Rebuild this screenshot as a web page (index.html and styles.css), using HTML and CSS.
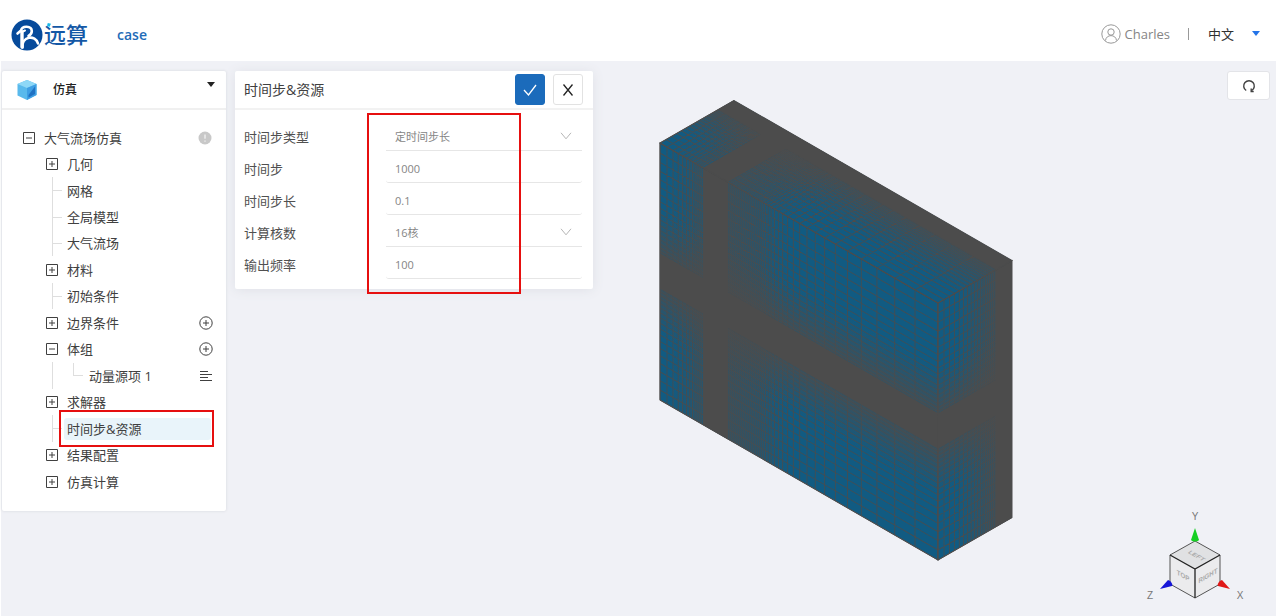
FILE: index.html
```html
<!DOCTYPE html>
<html lang="zh-CN">
<head>
<meta charset="utf-8">
<title>case</title>
<link rel="stylesheet" href="styles.css">
</head>
<body>
<svg class="defs" width="0" height="0" aria-hidden="true">
  <symbol id="plus" viewBox="0 0 12 12"><path d="M.5.5h11v11H.5zM3 6h6M6 3v6"/></symbol>
  <symbol id="minus" viewBox="0 0 12 12"><path d="M.5.5h11v11H.5zM3 6h6"/></symbol>
  <symbol id="add" viewBox="0 0 14 14"><circle cx="7" cy="7" r="6.2"/><path d="M4 7h6M7 4v6"/></symbol>
  <symbol id="chevron" viewBox="0 0 12 8"><path d="M1 .8l5 6 5-6"/></symbol>
</svg>
<header class="topbar">
  <div class="brand">
    <svg class="brand-mark" viewBox="0 0 32 32" aria-hidden="true">
      <circle cx="16" cy="16" r="15.5" fill="#064a9b"/>
      <g fill="none" stroke="#fff" stroke-width="2.600" stroke-linecap="round" stroke-linejoin="round">
        <path d="M6.500 14.500L10 11.500C11 6.500 20.500 6.500 20.800 12C20.800 14.500 19.500 16 17.500 17"/>
        <path d="M10.500 13L14 11.500" stroke-width="2"/>
        <path d="M11 13V28" stroke-width="3.400"/>
        <path d="M11.500 28.500C10.500 17 24.500 15.500 27 24.500"/>
      </g>
    </svg>
    <span class="brand-name">远算</span>
    <svg class="brand-dot" viewBox="0 0 5 5" aria-hidden="true"><path d="M1 0l4 1-2 4-3-2z" fill="#18b8e8"/></svg>
  </div>
  <a class="case" href="#">case</a>
  <div class="account">
    <svg class="avatar" viewBox="0 0 20 20" aria-hidden="true"><circle cx="10" cy="10" r="9.200"/><circle cx="10" cy="8" r="3.200"/><path d="M4.500 16.500c.5-6.500 10.500-6.500 11 0"/></svg>
    <span class="user">Charles</span>
    <span class="divider"></span>
    <button class="lang" type="button">中文<span class="caret caret-blue"></span></button>
  </div>
</header>

<main class="workspace">
  <aside class="card sidebar">
    <button class="side-head" type="button">
      <svg class="cube" viewBox="0 0 20 20" aria-hidden="true">
        <path d="M10 0l9.500 4v11L10 20 .5 15.500V4z" fill="#59b9ec"/>
        <path d="M10 0l9.500 4L10 8 .5 4z" fill="#8ed8f7"/>
        <path d="M10 8l9.500-4v11L10 20z" fill="#3f9fe4"/>
        <path d="M11.500 15L18 6.500v7.500l-6.500 3.500z" fill="#1f72c4"/>
      </svg>
      <span>仿真</span>
      <span class="caret"></span>
    </button>
    <ul class="tree">
      <li class="row parent root"><svg class="box"><use href="#minus"/></svg><span>大气流场仿真</span><svg class="act" viewBox="0 0 14 14" aria-hidden="true"><circle cx="7" cy="7" r="6.500" fill="#c8c8c8" stroke="none"/><path d="M7 3.500v4.200M7 9.500v1.200" stroke="#fff"/></svg></li>
      <li class="row leaf"><svg class="box"><use href="#plus"/></svg><span>几何</span></li>
      <li class="row parent"><i class="guide"></i><span>网格</span></li>
      <li class="row leaf"><i class="guide"></i><span>全局模型</span></li>
      <li class="row leaf"><i class="guide"></i><span>大气流场</span></li>
      <li class="row parent"><svg class="box"><use href="#plus"/></svg><span>材料</span></li>
      <li class="row leaf"><i class="guide"></i><span>初始条件</span></li>
      <li class="row parent"><svg class="box"><use href="#plus"/></svg><span>边界条件</span><button class="act-btn" type="button" aria-label="添加边界条件"><svg class="act"><use href="#add"/></svg></button></li>
      <li class="row leaf"><svg class="box"><use href="#minus"/></svg><span>体组</span><button class="act-btn" type="button" aria-label="添加体组"><svg class="act"><use href="#add"/></svg></button></li>
      <li class="row parent"><i class="guide plain"></i><i class="elbow"></i><span>动量源项 1</span><button class="act-btn" type="button" aria-label="菜单"><svg class="act" viewBox="0 0 14 14"><path d="M1 2.500h8M1 5.500h12M1 8.500h8M1 11.500h12"/></svg></button></li>
      <li class="row leaf"><svg class="box"><use href="#plus"/></svg><span>求解器</span></li>
      <li class="row parent"><i class="guide"></i><span class="selected">时间步&amp;资源<i class="mark mark-row"></i></span></li>
      <li class="row leaf"><svg class="box"><use href="#plus"/></svg><span>结果配置</span></li>
      <li class="row parent"><svg class="box"><use href="#plus"/></svg><span>仿真计算</span></li>
    </ul>
  </aside>

  <form class="card settings">
    <div class="settings-head">
      <h1>时间步&amp;资源</h1>
      <button class="btn ok" type="button" aria-label="确定"><svg viewBox="0 0 14 12"><path d="M1 6l4.500 5L13 1"/></svg></button>
      <button class="btn" type="button" aria-label="关闭"><svg viewBox="0 0 14 12"><path d="M2.500.5l9 11M11.500.5l-9 11"/></svg></button>
    </div>
    <div class="fields">
      <label for="type">时间步类型</label>
      <div class="pick"><select id="type"><option>定时间步长</option></select><svg><use href="#chevron"/></svg></div>
      <label for="steps">时间步</label>
      <input id="steps" type="text" value="1000">
      <label for="dt">时间步长</label>
      <input id="dt" type="text" value="0.1">
      <label for="cores">计算核数</label>
      <div class="pick"><select id="cores"><option>16核</option></select><svg><use href="#chevron"/></svg></div>
      <label for="freq">输出频率</label>
      <input id="freq" type="text" value="100">
    </div>
    <i class="mark mark-fields"></i>
  </form>

  <section class="viewer">
    <svg class="model" viewBox="0 0 356 462" role="img" aria-label="网格模型">
      <defs><linearGradient id="fade"><stop offset="0" stop-color="#4c4c4c" stop-opacity="0"/><stop offset="1" stop-color="#4c4c4c" stop-opacity=".9"/></linearGradient></defs>
      <g id="mesh"></g>
    </svg>
    <button class="reset" type="button" aria-label="重置视图"><svg viewBox="0 0 14 14"><path d="M4.200 11.500A5.300 5.300 0 1 1 9.800 11.500"/><path d="M9.200 9.500v3h2.500"/></svg></button>
    <svg class="axes" viewBox="0 0 108 96" aria-hidden="true">
      <path d="M54 33l25 14v29L54 90 29 76V47z" fill="#ebebed"/>
      <path d="M54 33l25 14-25 14-25-14z" fill="#e0e1e3"/>
      <path d="M54 33l25 14v29L54 90 29 76V47z" fill="none" stroke="#555" stroke-width="1"/>
      <path d="M29 47l25 14 25-14M54 61v29" fill="none" stroke="#222" stroke-width="1.300"/>
      <g class="face-text">
        <text transform="matrix(.87 .5 -.7 .5 54 49)">LEFT</text>
        <text transform="matrix(.87 .5 0 1 42 70)">TOP</text>
        <text transform="matrix(.87 -.5 0 1 67 70)">RIGHT</text>
      </g>
      <path d="M54 20l4 12c-2 2-6 2-8 0z" fill="#16cf24"/>
      <path d="M19 81l8-9c3 1 5 4 4 6z" fill="#1515d8"/>
      <path d="M89 81l-8-9c-3 1-5 4-4 6z" fill="#e01818"/>
      <g class="axis-text"><text x="54" y="12">Y</text><text x="9" y="91">Z</text><text x="99" y="91">X</text></g>
    </svg>
  </section>
</main>
<script src="mesh.js"></script>
</body>
</html>
```

FILE: styles.css
```css
* { box-sizing: border-box; }

body {
  margin: 0;
  min-height: 100vh;
  display: flex;
  flex-direction: column;
  background: #fff;
  color: #404040;
  font: 13px/20px "Open Sans", "Noto Sans CJK SC", sans-serif;
}

button, input, select { font: inherit; color: inherit; border: 0; margin: 0; }
button { padding: 0; background: none; cursor: pointer; }
svg { display: block; fill: none; stroke: currentColor; }
.defs { position: absolute; }

.topbar {
  height: 61px;
  padding: 8px 18px 0 11px;
  display: flex;
  align-items: center;
}
.brand { position: relative; display: flex; align-items: center; gap: 1px; color: #1458a6; }
.brand-mark { width: 32px; height: 32px; stroke: none; }
.brand-name { padding-bottom: 2px; font-size: 22px; line-height: 30px; font-weight: 500; }
.brand-dot { position: absolute; left: 36px; top: 4px; width: 4px; height: 4px; stroke: none; }
.case { margin-left: 29px; color: #1f6cb8; font-size: 14px; font-weight: 600; text-decoration: none; }
.account { margin-left: auto; display: flex; align-items: center; padding-bottom: 2px; color: #858585; }
.avatar { width: 20px; height: 20px; margin-right: 4px; color: #999; }
.divider { width: 1px; height: 12px; margin: 0 19px 0 18px; background: #999; }
.lang { display: flex; align-items: center; gap: 18px; color: #303030; }

.caret {
  width: 8px;
  height: 5px;
  background: #222;
  clip-path: polygon(0 0, 100% 0, 50% 100%);
}
.caret-blue { background: #2474e8; }

.workspace {
  flex: 1;
  display: flex;
  align-items: flex-start;
  gap: 9px;
  margin: 0 2px 0 1px;
  padding: 10px 0 0 1px;
  background: #f0f1f6;
}
.card { background: #fff; border-radius: 2px; box-shadow: 0 0 3px #d4d6dc; }

.sidebar { width: 224px; flex: none; }
.side-head {
  width: 100%;
  height: 39px;
  padding: 0 11px 0 15px;
  display: flex;
  align-items: center;
  gap: 16px;
  border-bottom: 2px solid #f0f0f0;
  color: #222;
  font-size: 12px;
  font-weight: 500;
}
.cube { width: 20px; height: 20px; stroke: none; }
.side-head .caret { margin: 0 0 10px auto; }

.tree { margin: 0; padding: 14px 13px 16px 21px; list-style: none; }
.row { display: flex; align-items: center; padding-left: 23px; }
.row > span { white-space: nowrap; }
.parent { height: 27px; }
.leaf { height: 26px; }
.root { padding-left: 0; }
.box { width: 12px; height: 12px; margin-right: 9px; }
.act { width: 14px; height: 14px; margin-left: auto; }
.root .act { margin-right: 1px; }
.act-btn { margin-left: auto; }
.guide {
  align-self: stretch;
  width: 15px;
  margin-left: 6px;
  border-left: 1px solid #dedede;
  background: linear-gradient(#dedede, #dedede) 0 50% / 9px 1px no-repeat;
}
.guide.plain { background: none; }
.elbow {
  width: 10px;
  height: 13px;
  margin: 0 6px 12px 6px;
  border: solid #dedede;
  border-width: 0 0 1px 1px;
}
.selected {
  position: relative;
  flex: 1;
  margin: 0 2px 0 -3px;
  padding: 1px 3px;
  border-radius: 3px;
  background: #e9f4fa;
}
.mark { position: absolute; border: 2px solid #e60f0f; pointer-events: none; }
.mark-row { inset: -8px -3px -7px -5px; }
.mark-fields { left: 132px; top: 42px; width: 154px; bottom: -5px; }

.settings { position: relative; width: 358px; flex: none; box-shadow: 0 1px 12px #dfe1e7; }
.settings-head {
  height: 39px;
  padding: 0 10px 0 9px;
  display: flex;
  align-items: center;
  gap: 8px;
  border-bottom: 2px solid #f2f2f2;
}
.settings-head h1 { flex: 1; margin: 0; font-size: 14px; font-weight: 400; }
.btn {
  width: 30px;
  height: 31px;
  display: grid;
  place-items: center;
  border: 1px solid #e2e2e2;
  border-radius: 3px;
  color: #222;
}
.btn svg { width: 14px; height: 12px; stroke-width: 1.3; }
.ok { background: #1b6bbb; border-color: #1b6bbb; color: #fff; }

.fields {
  padding: 9px 11px 10px 9px;
  display: grid;
  grid-template-columns: 142px 1fr;
  grid-auto-rows: 32px;
  align-items: center;
  color: #505050;
}
.fields input, .fields select {
  width: 100%;
  height: 31px;
  padding: 4px 9px 0;
  border-bottom: 1px solid #e6e6e6;
  border-radius: 3px;
  background: none;
  color: #858585;
  font-size: 11px;
  outline: 0;
  appearance: none;
}
.fields label { padding-top: 3px; }
.fields select { border-radius: 0; }
.pick { display: grid; align-items: center; }
.pick > * { grid-area: 1 / 1; }
.pick svg { width: 12px; height: 8px; margin: 2px 10px 0 0; justify-self: end; color: #b5b5b5; pointer-events: none; }

.viewer { position: relative; flex: 1; align-self: stretch; }
.model { position: absolute; left: 57px; top: 28px; width: 356px; height: 462px; stroke: none; }
.reset {
  position: absolute;
  right: 6px;
  top: 0;
  width: 43px;
  height: 29px;
  display: grid;
  place-items: center;
  background: #fff;
  border: 1px solid #e3e4e8;
  border-radius: 3px;
}
.reset svg { width: 14px; height: 14px; stroke-width: 1.4; }
.axes { position: absolute; right: 27px; bottom: 12px; width: 108px; height: 96px; stroke: none; }
.axes text { text-anchor: middle; stroke: none; }
.face-text { fill: #aaa; font: 700 7px "Liberation Sans", sans-serif; }
.axis-text { fill: #777; font: 10px "Liberation Sans", sans-serif; }
```

FILE: mesh.js
```javascript
// Draws the three visible faces of a box with a graded grid on each.
const LENGTH = 278, DEPTH = 74, HEIGHT = 257;
const LINE = '#4c4c4c', CELL = '#115b82';

// Line positions from `start`, with cells shrinking by `ratio` until `end`.
function graded(start, dir, cell, ratio, end) {
  const out = [];
  for (let p = start; (end - p) * dir > 0; cell = Math.max(cell * ratio, 2)) {
    out.push(p);
    p += dir * cell;
  }
  return out;
}

// `fades` are [clear, solid] positions between which the grid merges into the line colour.
const along = {
  lines: [...graded(0, 1, 7, 0.86, 43), ...graded(LENGTH, -1, 23, 0.88, 68)],
  solid: [[43, 68]],
  fades: [[10, 80], [130, 40]]
};
const deep = { lines: graded(0, 1, 6, 0.92, 58), solid: [[58, DEPTH]], fades: [[20, 66]] };
const tall = {
  lines: [...graded(0, 1, 10, 0.94, 110), ...graded(HEIGHT, -1, 10, 0.94, 146)],
  solid: [[110, 146]],
  fades: [[65, 118], [191, 138]]
};

function face(matrix, w, h, xs, ys) {
  const v = xs.lines.map(x => `M${x.toFixed(2)} 0V${h}`).join('');
  const l = ys.lines.map(y => `M0 ${y.toFixed(2)}H${w}`).join('');
  const bands = xs.solid.map(([a, b]) => `M${a} 0H${b}V${h}H${a}z`).join('') +
    ys.solid.map(([a, b]) => `M0 ${a}H${w}V${b}H0z`).join('');
  const shade = (fades, turn) => fades.map(([a, b]) => {
    const place = turn ? `matrix(0 ${b - a} ${w} 0 0 ${a})` : `matrix(${b - a} 0 0 ${h} ${a} 0)`;
    return `<path d="M0 0H1V1H0z" fill="url(#fade)" transform="${place}"/>`;
  });
  // The first fade of each axis stops at the band, so it is clipped to its own side.
  return `<g transform="matrix(${matrix})">
    <path d="M0 0H${w}V${h}H0z" fill="${CELL}"/>
    <path d="${v}${l}" stroke="${LINE}" stroke-width="0.8" fill="none"/>
    ${clipped(shade(xs.fades, false), xs.solid[0], w, h, false)}
    ${clipped(shade(ys.fades, true), ys.solid[0], w, h, true)}
    <path d="${bands}" fill="${LINE}"/>
    <path d="M0 0H${w}V${h}H0z" stroke="${LINE}" fill="none"/></g>`;
}

let clipCount = 0;
function clipped(shades, [a, b], w, h, turn) {
  const sides = turn
    ? [`M0 0H${w}V${a}H0z`, `M0 ${b}H${w}V${h}H0z`]
    : [`M0 0H${a}V${h}H0z`, `M${b} 0H${w}V${h}H${b}z`];
  return shades.map((shade, i) => {
    const id = `side${clipCount++}`;
    return `<clipPath id="${id}"><path d="${sides[i]}"/></clipPath><g clip-path="url(#${id})">${shade}</g>`;
  }).join('');
}

const slope = 160 / LENGTH, rise = -42.500 / DEPTH;
document.getElementById('mesh').innerHTML =
  face([1, slope, 0, 1, 1, 44], LENGTH, HEIGHT, along, tall) +
  face([1, rise, 0, 1, 279, 204], DEPTH, HEIGHT, deep, tall) +
  face([1, slope, 1, rise, 1, 44], LENGTH, DEPTH, along, deep);
```
